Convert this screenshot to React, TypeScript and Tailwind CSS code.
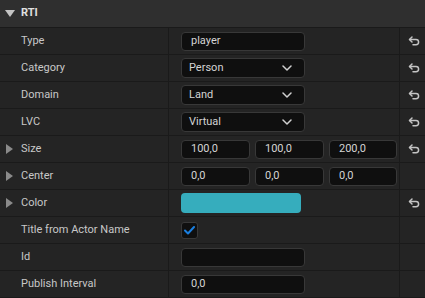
import React from 'react';

const ResetIcon = () => (
  <svg width="12" height="10" viewBox="0 0 12 10" fill="none">
    <path d="M4 1 L1.5 3.5 L4 6" stroke="#c4c4c4" strokeWidth="1.5" strokeLinecap="round" strokeLinejoin="round" />
    <path d="M1.8 3.5 H8 a2.6 2.6 0 0 1 0 5.2 H5" stroke="#c4c4c4" strokeWidth="1.5" strokeLinecap="round" />
  </svg>
);

const Chevron = () => (
  <svg width="10" height="6" viewBox="0 0 10 6" fill="none">
    <path d="M1 1 L5 5 L9 1" stroke="#d0d0d0" strokeWidth="1.5" strokeLinecap="round" strokeLinejoin="round" />
  </svg>
);

const Caret = () => (
  <svg width="7" height="10" viewBox="0 0 7 10">
    <path d="M0 0 L7 5 L0 10 Z" fill="#8a8a8a" />
  </svg>
);

function Field({ value, w = 'w-[124px]' }: { value: string; w?: string }) {
  return (
    <div className={`${w} h-[19px] rounded-[4px] border border-[#383838] bg-[#0f0f0f] flex items-center px-[9px] text-[#d4d4d4]`}>
      {value}
    </div>
  );
}

function Combo({ value }: { value: string }) {
  return (
    <div className="w-[124px] h-[20px] rounded-[4px] border border-[#383838] bg-[#0f0f0f] flex items-center justify-between pl-[7px] pr-[12px] text-[#d4d4d4]">
      <span>{value}</span>
      <Chevron />
    </div>
  );
}

function Row({
  label,
  expandable,
  reset,
  children,
}: {
  label: string;
  expandable?: boolean;
  reset?: boolean;
  children: React.ReactNode;
}) {
  return (
    <div className="flex h-[27px] border-b border-[#1a1a1a] bg-[#242424]">
      <div className="w-[169px] flex items-center pl-[6px] border-r border-[#1a1a1a] text-[#c8c8c8]">
        <span className="w-[15px] flex">{expandable && <Caret />}</span>
        {label}
      </div>
      <div className="w-[231px] flex items-center pl-[12px] gap-[5px] border-r border-[#1a1a1a]">{children}</div>
      <div className="flex-1 flex items-center justify-center pl-[2px]">{reset && <ResetIcon />}</div>
    </div>
  );
}

export default function App() {
  return (
    <div
      className="w-[425px] h-[298px] bg-[#242424] overflow-hidden text-[11px]"
      style={{ fontFamily: 'Roboto, "Liberation Sans", sans-serif' }}
    >
      <div className="h-[28px] bg-[#2f2f2f] border-b border-[#1a1a1a] flex items-center pl-[5px]">
        <svg width="10" height="7" viewBox="0 0 10 7">
          <path d="M0 0 H10 L5 7 Z" fill="#c4c4c4" />
        </svg>
        <span className="ml-[6px] font-bold text-[#e0e0e0]">RTI</span>
      </div>
      <Row label="Type" reset>
        <Field value="player" />
      </Row>
      <Row label="Category" reset>
        <Combo value="Person" />
      </Row>
      <Row label="Domain" reset>
        <Combo value="Land" />
      </Row>
      <Row label="LVC" reset>
        <Combo value="Virtual" />
      </Row>
      <Row label="Size" expandable reset>
        <Field value="100,0" w="w-[69px]" />
        <Field value="100,0" w="w-[69px]" />
        <Field value="200,0" w="w-[68px]" />
      </Row>
      <Row label="Center" expandable>
        <Field value="0,0" w="w-[69px]" />
        <Field value="0,0" w="w-[69px]" />
        <Field value="0,0" w="w-[68px]" />
      </Row>
      <Row label="Color" expandable reset>
        <div className="w-[120px] h-[20px] rounded-[4px] bg-[#36adbd]" />
      </Row>
      <Row label="Title from Actor Name">
        <div className="w-[17px] h-[17px] rounded-[3px] border border-[#383838] bg-[#0f0f0f] flex items-center justify-center">
          <svg width="11" height="9" viewBox="0 0 11 9" fill="none">
            <path d="M1 4.5 L4 7.5 L10 1" stroke="#1a7fe0" strokeWidth="2" strokeLinecap="round" strokeLinejoin="round" />
          </svg>
        </div>
      </Row>
      <Row label="Id">
        <Field value="" />
      </Row>
      <Row label="Publish Interval">
        <Field value="0,0" />
      </Row>
    </div>
  );
}
